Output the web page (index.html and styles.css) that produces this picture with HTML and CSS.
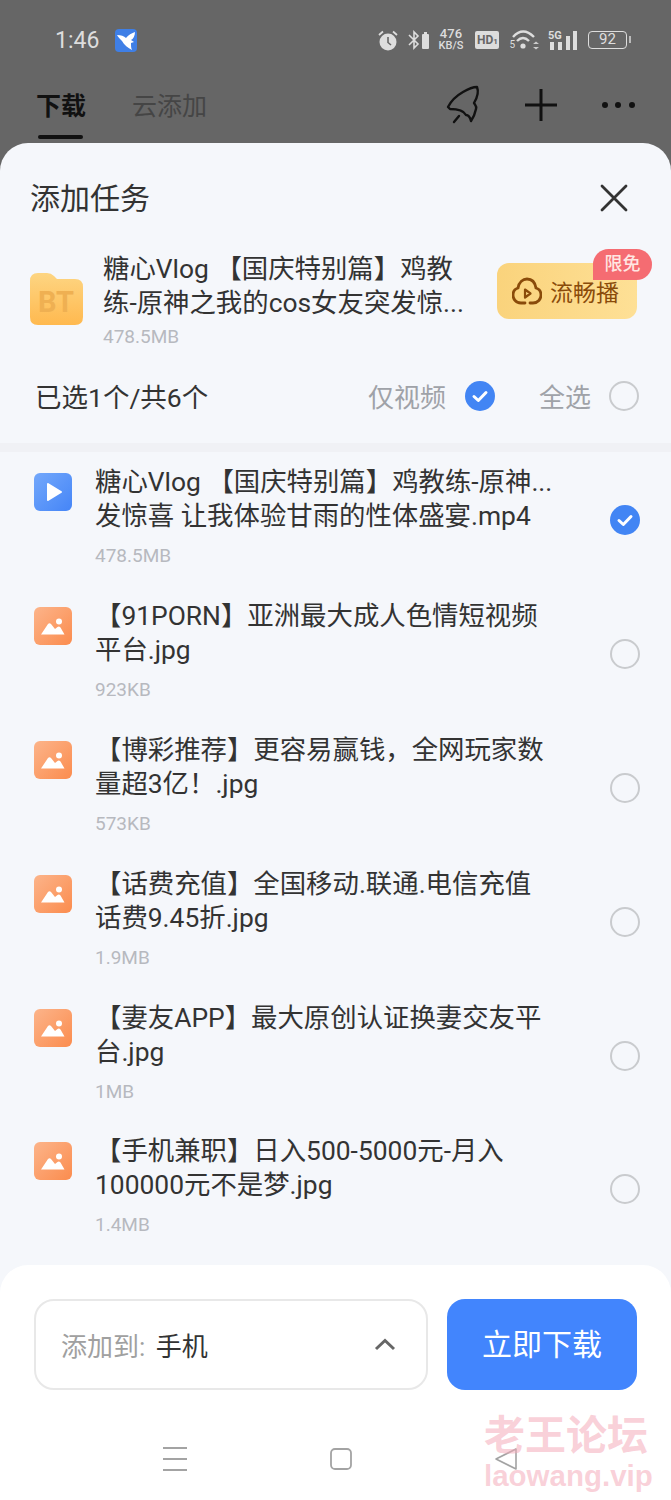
FILE: index.html
```html
<!DOCTYPE html>
<html lang="en">
<head>
    <meta charset="UTF-8">
    <meta name="viewport" content="width=device-width, initial-scale=1.0">
    <title>添加任务</title>
    <link rel="stylesheet" href="styles.css">
</head>
<body>
    <svg class="defs" width="0" height="0">
        <defs>
            <linearGradient id="blueGrad" x1="0" y1="0" x2="1" y2="1">
                <stop offset="0" stop-color="#73a8fb"/>
                <stop offset="1" stop-color="#4585f7"/>
            </linearGradient>
            <linearGradient id="orangeGrad" x1="0" y1="0" x2="1" y2="1">
                <stop offset="0" stop-color="#fcb48a"/>
                <stop offset="1" stop-color="#fb8c4e"/>
            </linearGradient>
            <linearGradient id="folderGrad" x1="0" y1="0" x2="0" y2="1">
                <stop offset="0" stop-color="#fdd582"/>
                <stop offset="1" stop-color="#ffb94f"/>
            </linearGradient>
            <symbol id="imgIcon" viewBox="0 0 38 38">
                <rect width="38" height="38" rx="6" fill="url(#orangeGrad)"/>
                <circle cx="25" cy="14.5" r="3" fill="#fff"/>
                <path d="M7 27.5 L14 17 Q15.500 15.500 17 17 L21 22 L23.500 20 Q25 19 26.500 20.500 L30.500 27.500 Z" fill="#fff"/>
            </symbol>
            <symbol id="checkOn" viewBox="0 0 30 30">
                <circle cx="15" cy="15" r="15" fill="#4285f4"/>
                <path d="M9 15.500 L13.300 19.500 L21 11.500" fill="none" stroke="#fff" stroke-width="3" stroke-linecap="round" stroke-linejoin="round"/>
            </symbol>
        </defs>
    </svg>

    <div class="top-area">
        <div class="status-bar">
            <div class="status-left">
                <span class="clock">1:46</span>
                <svg class="app-badge" width="22" height="23" viewBox="0 0 22 23">
                    <rect width="22" height="23" rx="4" fill="#3f7fe6"/>
                    <path d="M2 6 C6 6 9 7 11 9 C13 6 17 4 20 3 C20 7 18 10 16 11 L19 13 L16 14 C16 17 16 19 17 21 C13 19 9 16 7 12 C5 10 3 8 2 6 Z" fill="#fff"/>
                </svg>
            </div>
            <div class="status-right">
                <svg width="20" height="21" viewBox="0 0 20 21">
                    <circle cx="10" cy="12" r="8.500" fill="#ddd"/>
                    <path d="M10 7 V12.500 L13 15" fill="none" stroke="#666" stroke-width="1.600"/>
                    <path d="M1 5 L5 1.500 M19 5 L15 1.500" stroke="#ddd" stroke-width="1.800"/>
                </svg>
                <svg width="21" height="20" viewBox="0 0 21 20">
                    <path d="M1 5 L10 14 L6 18 V2 L10 6 L1 15" fill="none" stroke="#ddd" stroke-width="1.600"/>
                    <rect x="14" y="4" width="7" height="15" rx="1" fill="#ddd"/>
                    <rect x="16" y="2" width="3" height="2" fill="#ddd"/>
                </svg>
                <div class="speed"><span>476</span><span class="speed-unit">KB/S</span></div>
                <span class="hd-tag">HD<small>1</small></span>
                <div class="wifi">
                    <span class="wifi-num">5</span>
                    <svg width="28" height="22" viewBox="0 0 28 22">
                        <path d="M1 8 Q11 -3 22 8 M5 12 Q11 6 17 12" fill="none" stroke="#ddd" stroke-width="2.400"/>
                        <circle cx="11" cy="17" r="2.600" fill="#ddd"/>
                        <path d="M21 15 L24 12.500 L27 15 Z M21 18 L27 18 L24 20.500 Z" fill="#ccc"/>
                    </svg>
                </div>
                <div class="signal">
                    <span class="signal-5g">5G</span>
                    <svg width="30" height="19" viewBox="0 0 30 19">
                        <rect x="2" y="11" width="4" height="8" fill="#ddd"/>
                        <rect x="10" y="11" width="4" height="8" fill="#ddd"/>
                        <rect x="18" y="5" width="4" height="14" fill="#ddd"/>
                        <rect x="25" y="0" width="4" height="19" fill="#ddd"/>
                    </svg>
                </div>
                <div class="battery"><span class="battery-num">92</span></div>
            </div>
        </div>
        <div class="tabs">
            <div class="tab-list">
                <span class="tab tab-active">下载</span>
                <span class="tab">云添加</span>
            </div>
            <div class="tab-actions">
                <svg width="38" height="42" viewBox="0 0 38 42">
                    <path d="M4 23 C7 17 12 12 19 8 C24 5 29 3 33 3 C35 8 33 14 30 19 C31 21 33 22 32 25 C31 30 29 34 27 37 C26 33 25 31 22 31 C20 27 15 25 6 25 Z" fill="none" stroke="#111" stroke-width="2.400" stroke-linejoin="round"/>
                    <path d="M15 32 L10 38" stroke="#111" stroke-width="2.400" stroke-linecap="round"/>
                </svg>
                <svg width="34" height="34" viewBox="0 0 34 34">
                    <path d="M17 1 V33 M1 17 H33" stroke="#111" stroke-width="3"/>
                </svg>
                <svg width="36" height="8" viewBox="0 0 36 8">
                    <circle cx="5" cy="4" r="3" fill="#111"/>
                    <circle cx="18" cy="4" r="3" fill="#111"/>
                    <circle cx="32" cy="4" r="3" fill="#111"/>
                </svg>
            </div>
        </div>
    </div>

    <div class="sheet">
        <div class="sheet-head">
            <h1 class="sheet-title">添加任务</h1>
            <svg width="28" height="28" viewBox="0 0 28 28">
                <path d="M2 2 L26 26 M26 2 L2 26" stroke="#333" stroke-width="2.800" stroke-linecap="round"/>
            </svg>
        </div>

        <div class="torrent">
            <svg class="folder" width="53" height="54" viewBox="0 0 53 54">
                <path d="M0 9 Q0 1 8 1 H17 Q21 1 24 4 L27 7 H45 Q53 7 53 15 V45 Q53 53 45 53 H8 Q0 53 0 45 Z" fill="url(#folderGrad)"/>
                <text class="folder-text" x="26" y="40" text-anchor="middle">BT</text>
            </svg>
            <div class="torrent-info">
                <div class="file-name">糖心Vlog 【国庆特别篇】鸡教</div>
                <div class="file-name">练-原神之我的cos女友突发惊...</div>
                <div class="file-size">478.5MB</div>
            </div>
            <div class="play-btn">
                <svg width="30" height="28" viewBox="0 0 30 28">
                    <path d="M13 26 H9 C3 26 1 21 1 18 C1 14 3 12 6 11 C7 5 11 2 15 2 C20 2 23 5 24 11 C27 12 29 14 29 18 C29 22 26 26 21 26 H18" fill="none" stroke="#8a4b0a" stroke-width="2.800" stroke-linecap="round"/>
                    <path d="M13 12.500 L18.500 16.500 L13 20.500 Z" fill="none" stroke="#8a4b0a" stroke-width="2.200" stroke-linejoin="round"/>
                </svg>
                <span class="play-label">流畅播</span>
                <span class="free-badge">限免</span>
            </div>
        </div>

        <div class="select-bar">
            <span class="select-count">已选1个/共6个</span>
            <div class="select-opts">
                <span class="opt-label">仅视频</span>
                <svg class="check" viewBox="0 0 30 30"><use href="#checkOn"/></svg>
                <span class="opt-label opt-all">全选</span>
                <span class="check-off"></span>
            </div>
        </div>

        <div class="file-list">
            <div class="file-row">
                <svg class="file-icon" viewBox="0 0 38 38">
                    <rect width="38" height="38" rx="6" fill="url(#blueGrad)"/>
                    <path d="M14 11 L27 19 L14 27 Z" fill="#fff" stroke="#fff" stroke-width="2" stroke-linejoin="round"/>
                </svg>
                <div class="file-body">
                    <div class="file-name">糖心Vlog 【国庆特别篇】鸡教练-原神...</div>
                    <div class="file-name">发惊喜 让我体验甘雨的性体盛宴.mp4</div>
                    <div class="file-size">478.5MB</div>
                </div>
                <svg class="check" viewBox="0 0 30 30"><use href="#checkOn"/></svg>
            </div>
            <div class="file-row">
                <svg class="file-icon" viewBox="0 0 38 38"><use href="#imgIcon"/></svg>
                <div class="file-body">
                    <div class="file-name">【91PORN】亚洲最大成人色情短视频</div>
                    <div class="file-name">平台.jpg</div>
                    <div class="file-size">923KB</div>
                </div>
                <span class="check-off"></span>
            </div>
            <div class="file-row">
                <svg class="file-icon" viewBox="0 0 38 38"><use href="#imgIcon"/></svg>
                <div class="file-body">
                    <div class="file-name">【博彩推荐】更容易赢钱，全网玩家数</div>
                    <div class="file-name">量超3亿！.jpg</div>
                    <div class="file-size">573KB</div>
                </div>
                <span class="check-off"></span>
            </div>
            <div class="file-row">
                <svg class="file-icon" viewBox="0 0 38 38"><use href="#imgIcon"/></svg>
                <div class="file-body">
                    <div class="file-name">【话费充值】全国移动.联通.电信充值</div>
                    <div class="file-name">话费9.45折.jpg</div>
                    <div class="file-size">1.9MB</div>
                </div>
                <span class="check-off"></span>
            </div>
            <div class="file-row">
                <svg class="file-icon" viewBox="0 0 38 38"><use href="#imgIcon"/></svg>
                <div class="file-body">
                    <div class="file-name">【妻友APP】最大原创认证换妻交友平</div>
                    <div class="file-name">台.jpg</div>
                    <div class="file-size">1MB</div>
                </div>
                <span class="check-off"></span>
            </div>
            <div class="file-row">
                <svg class="file-icon" viewBox="0 0 38 38"><use href="#imgIcon"/></svg>
                <div class="file-body">
                    <div class="file-name">【手机兼职】日入500-5000元-月入</div>
                    <div class="file-name">100000元不是梦.jpg</div>
                    <div class="file-size">1.4MB</div>
                </div>
                <span class="check-off"></span>
            </div>
        </div>

        <div class="footer">
            <div class="footer-actions">
                <div class="target-box">
                    <span class="target-text"><span class="target-label">添加到:</span> 手机</span>
                    <svg width="22" height="13" viewBox="0 0 22 13">
                        <path d="M2 11 L11 2.500 L20 11" fill="none" stroke="#666" stroke-width="3"/>
                    </svg>
                </div>
                <div class="download-btn">立即下载</div>
            </div>
            <div class="nav-bar">
                <svg width="24" height="24" viewBox="0 0 24 24">
                    <path d="M0 1 H24 M0 12 H24 M0 23 H24" stroke="#a3a3a3" stroke-width="2"/>
                </svg>
                <svg width="22" height="22" viewBox="0 0 22 22">
                    <rect x="1" y="1" width="20" height="20" rx="4" fill="none" stroke="#a3a3a3" stroke-width="1.800"/>
                </svg>
                <svg width="22" height="22" viewBox="0 0 22 22">
                    <path d="M21 1 V21 L1 11 Z" fill="none" stroke="#a3a3a3" stroke-width="1.600" stroke-linejoin="round"/>
                </svg>
            </div>
        </div>
    </div>

    <div class="watermark">
        <div class="wm-cn">老王论坛</div>
        <div class="wm-en">laowang.vip</div>
    </div>
</body>
</html>
```

FILE: styles.css
```css
* {
    box-sizing: border-box;
}
body {
    font-family: Roboto, "Noto Sans CJK SC", sans-serif;
    width: 671px;
    height: 1500px;
    margin: 0;
    overflow: hidden;
    background-color: #666;
    color: #333;
    position: relative;
}
.defs {
    position: absolute;
}
.top-area {
    height: 143px;
    background-color: #666;
}
.status-bar {
    height: 80px;
    display: flex;
    justify-content: space-between;
    align-items: center;
    padding: 0 44px 0 55px;
    color: #ddd;
}
.status-left {
    display: flex;
    align-items: center;
    gap: 16px;
}
.clock {
    font-size: 23px;
    line-height: 26px;
    padding-top: 2px;
}
.status-right {
    display: flex;
    align-items: center;
    gap: 10px;
}
.speed {
    display: flex;
    flex-direction: column;
    align-items: center;
    margin-right: 2px;
    font-size: 13px;
    line-height: 12px;
    font-weight: 500;
}
.speed-unit {
    font-size: 11px;
}
.hd-tag {
    width: 24px;
    height: 18px;
    border-radius: 2px;
    background-color: #ddd;
    color: #666;
    font-size: 12px;
    font-weight: 700;
    line-height: 18px;
    text-align: center;
}
.hd-tag small {
    font-size: 8px;
}
.wifi {
    display: flex;
    align-items: flex-end;
}
.wifi-num {
    font-size: 10px;
    line-height: 12px;
    margin-right: -3px;
}
.signal {
    margin-left: -2px;
    position: relative;
    height: 19px;
}
.signal svg {
    display: block;
}
.signal-5g {
    position: absolute;
    left: 0;
    top: 0;
    font-size: 11px;
    font-weight: 700;
    line-height: 10px;
}
.battery {
    width: 39px;
    height: 18px;
    border: 1.500px solid #ddd;
    border-radius: 4px;
    text-align: center;
    font-size: 15px;
    line-height: 15px;
    position: relative;
}
.battery::after {
    content: "";
    position: absolute;
    right: -5px;
    top: 4px;
    width: 2px;
    height: 7px;
    background-color: #bbb;
}
.tabs {
    height: 63px;
    display: flex;
    justify-content: space-between;
    padding: 0 35px 0 36px;
}
.tab-list {
    display: flex;
    gap: 46px;
}
.tab {
    font-size: 25px;
    line-height: 54px;
    color: #454545;
}
.tab-active {
    font-weight: 700;
    color: #111;
    position: relative;
}
.tab-active::after {
    content: "";
    position: absolute;
    left: 2px;
    right: 3px;
    top: 55px;
    height: 4px;
    border-radius: 2px;
    background-color: #111;
}
.tab-actions {
    display: flex;
    align-items: center;
    gap: 42px;
    height: 50px;
}
.sheet {
    height: 1357px;
    background-color: #f5f7fb;
    border-radius: 28px 28px 0 0;
    display: flex;
    flex-direction: column;
}
.sheet-head {
    height: 109px;
    display: flex;
    justify-content: space-between;
    align-items: center;
    padding: 0 43px 0 30px;
}
.sheet-title {
    margin: -3px 0 0;
    font-size: 30px;
    font-weight: 400;
}
.torrent {
    height: 102px;
    display: flex;
    padding-left: 30px;
    position: relative;
}
.folder {
    margin-top: 20px;
    flex-shrink: 0;
}
.folder-text {
    font-family: Roboto, sans-serif;
    font-size: 29px;
    font-weight: 700;
    fill: #efb052;
}
.torrent-info {
    margin-left: 20px;
    width: 394px;
}
.file-name {
    font-size: 26.400px;
    line-height: 34px;
    white-space: nowrap;
}
.file-size {
    font-size: 19px;
    line-height: 34px;
    color: #b7b9bf;
}
.play-btn {
    width: 140px;
    height: 56px;
    margin-top: 11px;
    border-radius: 12px;
    background: linear-gradient(90deg, #fad37c, #fee096);
    display: flex;
    align-items: center;
    gap: 8px;
    padding-left: 15px;
    position: relative;
}
.play-label {
    font-size: 23px;
    color: #8a4b0a;
}
.free-badge {
    position: absolute;
    left: 96px;
    top: -14px;
    width: 59px;
    height: 31px;
    border-radius: 16px 16px 16px 0;
    background-color: #f56c72;
    color: #ffe6e2;
    font-size: 18px;
    font-weight: 500;
    line-height: 30px;
    text-align: center;
}
.select-bar {
    height: 89px;
    display: flex;
    justify-content: space-between;
    align-items: center;
    padding: 0 32px 6px 35px;
}
.select-count {
    font-size: 26.500px;
}
.select-opts {
    display: flex;
    align-items: center;
}
.opt-label {
    font-size: 26px;
    color: #9fa2a8;
    margin-right: 19px;
}
.opt-all {
    margin-left: 44px;
    margin-right: 18px;
}
.check {
    width: 30px;
    height: 30px;
    flex-shrink: 0;
}
.check-off {
    width: 30px;
    height: 30px;
    flex-shrink: 0;
    border: 2px solid #c9cbce;
    border-radius: 50%;
}
.file-list {
    border-top: 9px solid #f0f1f5;
    flex: 1;
}
.file-row {
    height: 133.900px;
    display: flex;
    align-items: flex-start;
    padding: 13px 31px 0 34px;
}
.file-icon {
    width: 38px;
    height: 38px;
    margin-top: 8px;
    flex-shrink: 0;
}
.file-body {
    flex: 1;
    margin-left: 23px;
}
.file-body .file-size {
    line-height: 24px;
    margin-top: 11px;
}
.file-row .check,
.file-row .check-off {
    margin-top: 40px;
}
.footer {
    height: 235px;
    background-color: #fff;
    border-radius: 28px 28px 0 0;
    padding: 34px 34px 0;
}
.footer-actions {
    display: flex;
    gap: 19px;
}
.target-box {
    width: 394px;
    height: 91px;
    border: 2px solid #e8e8e8;
    border-radius: 20px;
    display: flex;
    justify-content: space-between;
    align-items: center;
    padding: 0 30px 0 25px;
}
.target-text {
    font-size: 26px;
}
.target-label {
    color: #a0a0a0;
    margin-right: 4px;
}
.download-btn {
    width: 190px;
    height: 91px;
    border-radius: 18px;
    background-color: #4285fd;
    color: #fff;
    font-size: 30px;
    line-height: 91px;
    text-align: center;
}
.nav-bar {
    display: flex;
    justify-content: space-between;
    align-items: center;
    margin-top: 57px;
    padding: 0 120px 0 129px;
}
.watermark {
    position: absolute;
    left: 484px;
    top: 1413px;
    color: rgba(244, 170, 185, 0.55);
    font-weight: 700;
}
.wm-cn {
    font-size: 41px;
    line-height: 46px;
}
.wm-en {
    font-family: "Liberation Sans", sans-serif;
    font-size: 29.500px;
    line-height: 34px;
}
```
